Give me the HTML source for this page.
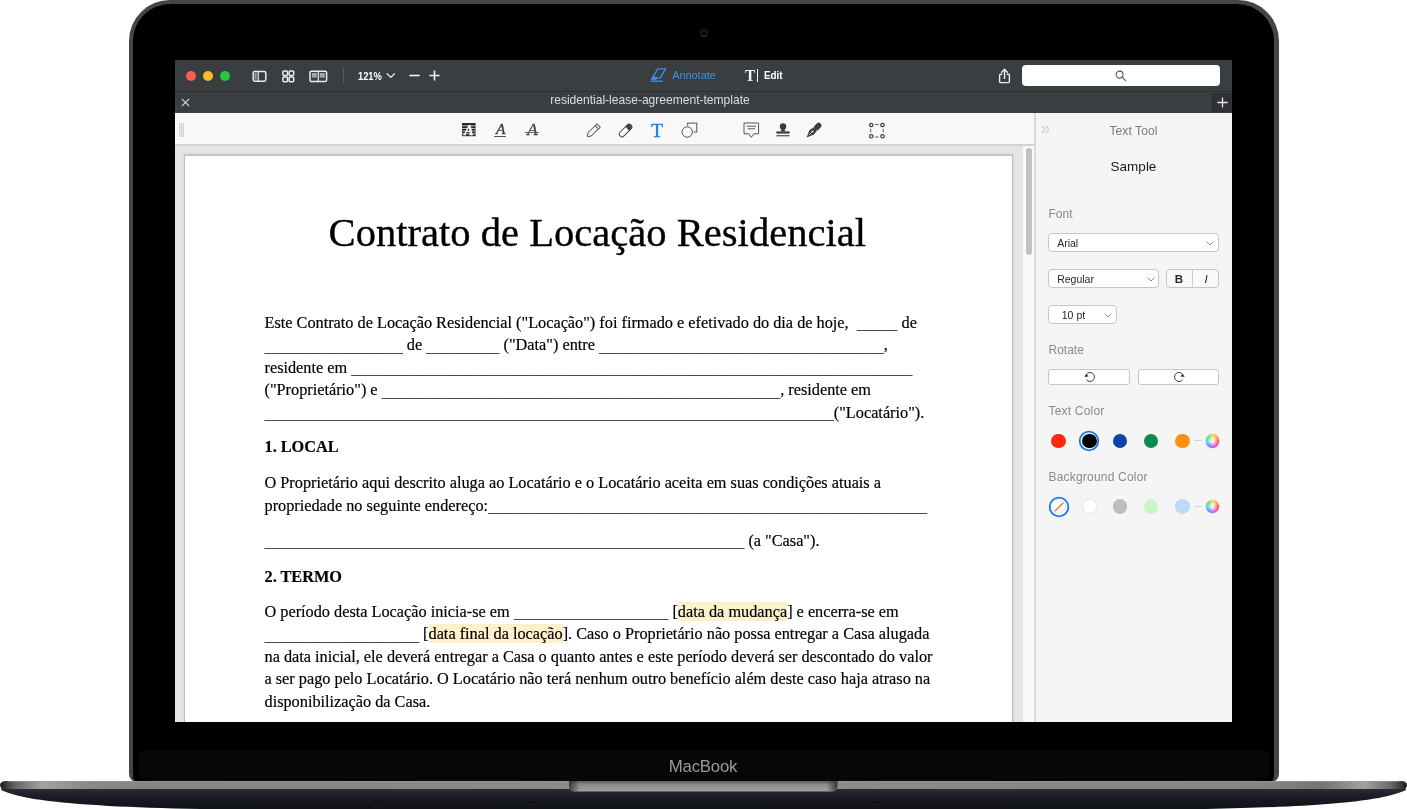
<!DOCTYPE html>
<html lang="pt">
<head>
<meta charset="utf-8">
<title>residential-lease-agreement-template</title>
<style>
*{box-sizing:border-box;margin:0;padding:0}
html,body{width:1407px;height:809px;overflow:hidden;background:#fff}
body{position:relative;font-family:"Liberation Sans",sans-serif}
.abs,svg.i{position:absolute}
svg.i{overflow:visible}
#lid{position:absolute;left:128.8px;top:0;width:1150px;height:782px;background:#464646;border-radius:41px 41px 8px 8px}
#lidin{position:absolute;left:133.2px;top:4.4px;width:1141.2px;height:777.6px;background:#000;border-radius:37px 37px 5px 5px}
#chin{position:absolute;left:139px;top:751px;width:1130px;height:30px;background:#070707;border-radius:0 0 9px 9px}
#cam{position:absolute;left:699.8px;top:28.5px;width:8px;height:8px;border-radius:50%;background:#0a0a0a;border:1.3px solid #222;border-bottom-color:#3a3a3a}
#macbook{will-change:transform;position:absolute;left:603px;width:200px;top:756px;text-align:center;font-size:16.8px;color:#9b9b9b;letter-spacing:-0.2px;line-height:22px}
#screen{will-change:transform;position:absolute;left:175px;top:60px;width:1057px;height:662px;background:#e5e5e5;overflow:hidden}
#titlebar{position:absolute;left:0;top:0;width:1057px;height:32px;background:#3b3e41}
#tabbar{position:absolute;left:0;top:31px;width:1057px;height:22.5px;background:#3b3e41;border-top:1.5px solid #2e3032;border-bottom:1.5px solid #1f2021}
#toolbar{position:absolute;left:0;top:53px;width:860px;height:33px;background:#f8f8f8;border-bottom:2px solid #d2d2d2;box-shadow:inset 0 -1px 0 #fdfdfd}
#docarea{position:absolute;left:0;top:86px;width:860px;height:576px;background:#e5e5e5}
#page{position:absolute;left:9px;top:94px;width:829px;height:600px;background:#fff;border:1px solid #bebebe;border-top:2px solid #c6c6c6;box-shadow:0 0 2px rgba(0,0,0,.12)}
#scroll{position:absolute;left:848px;top:86px;width:12px;height:576px;background:#fafafa}
#thumb{position:absolute;left:2.5px;top:2px;width:6.5px;height:106.5px;border-radius:4px;background:#c1c1c1}
#side{position:absolute;left:859px;top:53px;width:198px;height:609px;background:#f5f5f5;border-left:2px solid #dadada}
.doc{position:absolute;font-family:"Liberation Serif",serif;color:#000;white-space:pre;-webkit-text-stroke:.18px #000;font-size:16.28px;line-height:22.4px;height:22.4px}
.doc b{font-weight:bold}
.doc .u{position:relative;top:1.5px;-webkit-text-stroke:0;color:#2a2a2a}
.hl{background:#fdf1cc}
.t{position:absolute;white-space:pre;line-height:16px;height:16px}
.lbl{position:absolute;font-size:12px;color:#8a8a8a;line-height:16px;white-space:pre}
.sel{position:absolute;background:#fff;border:1px solid #c6c6c6;border-radius:4px;font-size:10.5px;color:#262626;white-space:pre}
.sel span{position:absolute;top:0;line-height:17px}
</style>
</head>
<body>
<div id="lid"></div>
<div id="lidin"></div>
<div id="chin"></div>
<div id="cam"></div>
<div id="macbook">MacBook</div>
<div id="screen">
<div id="titlebar"></div>
<div id="tabbar"></div>
<div id="toolbar"></div>
<div id="docarea"></div>
<div id="page"></div>
<div id="scroll"><div id="thumb"></div></div>
<div id="side"></div>
<div class="doc" style="left:153.60px;top:149.20px;font-size:40.58px;line-height:48px;height:48px;-webkit-text-stroke:.35px #000;">Contrato de Locação Residencial</div>
<div class="doc" style="left:89.50px;top:251.61px;">Este Contrato de Locação Residencial ("Locação") foi firmado e efetivado do dia de hoje,  <span class="u">_____</span> de</div>
<div class="doc" style="left:89.50px;top:274.11px;"><span class="u">_________________</span> de <span class="u">_________</span> ("Data") entre <span class="u">___________________________________</span>,</div>
<div class="doc" style="left:89.50px;top:296.71px;">residente em <span class="u">_____________________________________________________________________</span></div>
<div class="doc" style="left:89.50px;top:319.21px;">("Proprietário") e <span class="u">_________________________________________________</span>, residente em</div>
<div class="doc" style="left:89.50px;top:341.61px;"><span class="u">______________________________________________________________________</span>("Locatário").</div>
<div class="doc" style="left:89.50px;top:376.21px;"><b>1. LOCAL</b></div>
<div class="doc" style="left:89.50px;top:412.01px;">O Proprietário aqui descrito aluga ao Locatário e o Locatário aceita em suas condições atuais a</div>
<div class="doc" style="left:89.50px;top:434.51px;">propriedade no seguinte endereço:<span class="u">______________________________________________________</span></div>
<div class="doc" style="left:89.50px;top:469.61px;"><span class="u">___________________________________________________________</span> (a "Casa").</div>
<div class="doc" style="left:89.50px;top:505.61px;"><b>2. TERMO</b></div>
<div class="doc" style="left:89.50px;top:540.71px;">O período desta Locação inicia-se em <span class="u">___________________</span> [<span class="hl">data da mudança</span>] e encerra-se em</div>
<div class="doc" style="left:89.50px;top:563.31px;"><span class="u">___________________</span> [<span class="hl">data final da locação</span>]. Caso o Proprietário não possa entregar a Casa alugada</div>
<div class="doc" style="left:89.50px;top:585.81px;">na data inicial, ele deverá entregar a Casa o quanto antes e este período deverá ser descontado do valor</div>
<div class="doc" style="left:89.50px;top:608.21px;">a ser pago pelo Locatário. O Locatário não terá nenhum outro benefício além deste caso haja atraso na</div>
<div class="doc" style="left:89.50px;top:630.61px;">disponibilização da Casa.</div>
<div class="abs" style="left:11.20px;top:11.10px;width:10.2px;height:10.2px;border-radius:50%;background:#fc5b57"></div>
<div class="abs" style="left:28.20px;top:11.10px;width:10.2px;height:10.2px;border-radius:50%;background:#fdbc2e"></div>
<div class="abs" style="left:45.30px;top:11.10px;width:10.2px;height:10.2px;border-radius:50%;background:#27c840"></div>
<svg class="i" style="left:77.00px;top:10.00px" width="15" height="13" viewBox="0 0 15 13"><rect x="1.2" y="1.4" width="12.6" height="9.8" rx="1.6" fill="none" stroke="#ececec" stroke-width="1.5"/><line x1="6.2" y1="1.4" x2="6.2" y2="11.2" stroke="#ececec" stroke-width="1.2"/><rect x="2.6" y="3" width="2" height="6.6" fill="#ececec" opacity=".55"/></svg>
<svg class="i" style="left:106.60px;top:9.80px" width="13" height="13" viewBox="0 0 13 13"><rect x="0.9" y="0.9" width="4.6" height="4.6" rx="1" fill="none" stroke="#ececec" stroke-width="1.5"/><rect x="0.9" y="7.1" width="4.6" height="4.6" rx="1" fill="none" stroke="#ececec" stroke-width="1.5"/><rect x="7.1" y="0.9" width="4.6" height="4.6" rx="1" fill="none" stroke="#ececec" stroke-width="1.5"/><rect x="7.1" y="7.1" width="4.6" height="4.6" rx="1" fill="none" stroke="#ececec" stroke-width="1.5"/></svg>
<svg class="i" style="left:133.60px;top:9.80px" width="19" height="13" viewBox="0 0 19 13"><rect x="1" y="1.2" width="16.6" height="10.4" rx="1.4" fill="none" stroke="#ececec" stroke-width="1.5"/><line x1="9.3" y1="1.2" x2="9.3" y2="11.6" stroke="#ececec" stroke-width="1.2"/><rect x="2.8" y="3" width="5" height="4.6" fill="#ececec" opacity=".6"/><rect x="10.8" y="3" width="5" height="4.6" fill="#ececec" opacity=".6"/></svg>
<div class="abs" style="left:168.2px;top:8px;width:1px;height:15px;background:#5a5d60"></div>
<div class="t" style="left:182.60px;top:8.00px;font-size:11.8px;color:#fff;font-weight:bold;transform:scaleX(.79);transform-origin:0 50%">121%</div>
<svg class="i" style="left:210.50px;top:12.00px" width="10" height="8" viewBox="0 0 10 8"><path d="M1.2 1.8 L4.8 5.4 L8.4 1.8" fill="none" stroke="#e6e6e6" stroke-width="1.3" stroke-linecap="round" stroke-linejoin="round"/></svg>
<svg class="i" style="left:234.00px;top:10.00px" width="11" height="11" viewBox="0 0 11 11"><line x1="0.4" y1="5.5" x2="10.6" y2="5.5" stroke="#f4f4f4" stroke-width="1.6"/></svg>
<svg class="i" style="left:254.40px;top:9.90px" width="11" height="11" viewBox="0 0 11 11"><path d="M0.4 5.5H10.6M5.5 0.4V10.6" stroke="#f4f4f4" stroke-width="1.6" fill="none"/></svg>
<svg class="i" style="left:475.00px;top:8.00px" width="17" height="15" viewBox="0 0 17 15"><path d="M7.8 0.9 L15.6 0.9 L10.2 9.8 L2.4 9.8 Z" fill="none" stroke="#3d8fe2" stroke-width="1.3" stroke-linejoin="round"/><path d="M3.2 8.4 L1 11.7 L5.8 11.7 L7.2 9.8 Z" fill="#3d8fe2" stroke="#3d8fe2" stroke-width=".8" stroke-linejoin="round"/><line x1="0.8" y1="13.2" x2="12.8" y2="13.2" stroke="#3d8fe2" stroke-width="1.3"/></svg>
<div class="t" style="left:497.20px;top:6.80px;font-size:10.9px;color:#3d8fe2;font-weight:normal;">Annotate</div>
<div class="t" style="left:570px;top:6.5px;font-family:'Liberation Serif',serif;font-size:17px;font-weight:bold;line-height:18px;height:18px;color:#f2f2f2;transform:scaleX(.9);transform-origin:0 50%">T</div>
<div class="abs" style="left:581.6px;top:8.599999999999994px;width:1.3px;height:13.6px;background:#f2f2f2"></div>
<div class="t" style="left:589.30px;top:6.80px;font-size:10.9px;color:#fff;font-weight:bold;transform:scaleX(.9);transform-origin:0 50%">Edit</div>
<svg class="i" style="left:823.00px;top:7.50px" width="13" height="16" viewBox="0 0 13 16"><path d="M4.2 6.2H2.6Q1.6 6.2 1.6 7.2V13.6Q1.6 14.6 2.6 14.6H10.4Q11.4 14.6 11.4 13.6V7.2Q11.4 6.2 10.4 6.2H8.8" fill="none" stroke="#f0f0f0" stroke-width="1.4" stroke-linejoin="round"/><path d="M6.5 10.4V1.6M3.7 4.2L6.5 1.3L9.3 4.2" fill="none" stroke="#f0f0f0" stroke-width="1.4" stroke-linecap="round" stroke-linejoin="round"/></svg>
<div class="abs" style="left:847.2px;top:4.5px;width:198px;height:21.5px;border-radius:4px;background:#fff"></div>
<svg class="i" style="left:940.00px;top:10.00px" width="12" height="12" viewBox="0 0 12 12"><circle cx="4.6" cy="4.6" r="3.5" fill="none" stroke="#5c5c5c" stroke-width="1.1"/><line x1="7.2" y1="7.2" x2="10.6" y2="10.6" stroke="#5c5c5c" stroke-width="1.2" stroke-linecap="round"/></svg>
<svg class="i" style="left:5.50px;top:38.00px" width="9" height="9" viewBox="0 0 9 9"><path d="M0.8 0.8L8.2 8.2M8.2 0.8L0.8 8.2" stroke="#d8d8d8" stroke-width="1.1" fill="none"/></svg>
<div class="t" style="left:375.20px;top:32.40px;font-size:12.05px;color:#dedede;font-weight:normal;">residential-lease-agreement-template</div>
<div class="abs" style="left:1036.5px;top:32.5px;width:21px;height:19.5px;background:#2f3134;border-left:1px solid #27292b"></div>
<svg class="i" style="left:1041.50px;top:36.50px" width="11" height="11" viewBox="0 0 11 11"><path d="M0.4 5.5H10.6M5.5 0.4V10.6" stroke="#eaeaea" stroke-width="1.3" fill="none"/></svg>
<div class="abs" style="left:4px;top:63px;width:5px;height:13.6px;background:repeating-linear-gradient(90deg,#d2d2d2 0,#d2d2d2 1px,#ececec 1px,#ececec 2px)"></div>
<svg class="i" style="left:286.70px;top:63.00px" width="14" height="14" viewBox="0 0 14 14"><rect x="0" y="0" width="13.6" height="13.2" fill="#2b2b2b"/><rect x="0" y="2.4" width="13.6" height="0.9" fill="#f8f8f8" opacity=".75"/><rect x="0" y="5.0" width="13.6" height="0.9" fill="#f8f8f8" opacity=".75"/><rect x="0" y="7.6" width="13.6" height="0.9" fill="#f8f8f8" opacity=".75"/><rect x="0" y="10.2" width="13.6" height="0.9" fill="#f8f8f8" opacity=".75"/><text x="6.9" y="11.6" text-anchor="middle" font-family="Liberation Serif, serif" font-style="italic" font-weight="bold" font-size="14.5" fill="#fff" stroke="#fff" stroke-width=".25">A</text></svg>
<div class="t" style="left:321.00px;top:60.40px;font-family:'Liberation Serif',serif;font-style:italic;font-size:15.4px;line-height:18px;height:18px;color:#3c3c3c;-webkit-text-stroke:.3px #3c3c3c">A</div>
<div class="abs" style="left:319.2px;top:75.6px;width:12px;height:1px;background:#555"></div>
<div class="t" style="left:352.20px;top:60.86px;font-family:'Liberation Serif',serif;font-style:italic;font-size:17px;line-height:18px;height:18px;color:#3c3c3c;-webkit-text-stroke:.3px #3c3c3c">A</div>
<div class="abs" style="left:349.70000000000005px;top:71.6px;width:14.2px;height:1px;background:#666"></div>
<svg class="i" style="left:411.20px;top:62.80px" width="15" height="15" viewBox="0 0 15 15"><g transform="rotate(45 7.5 7.5)"><path d="M5.2 0.3 H9.8 V12.6 L8.2 15.6 Q7.5 16.4 6.8 15.6 L5.2 12.6 Z" fill="none" stroke="#5a5a5a" stroke-width="1" stroke-linejoin="round"/><path d="M5.2 2.8H9.8" stroke="#5a5a5a" stroke-width="1" fill="none"/></g></svg>
<svg class="i" style="left:443.10px;top:62.50px" width="15" height="15" viewBox="0 0 15 15"><g transform="rotate(45 7.5 7.5)"><rect x="4.8" y="-0.2" width="5.4" height="15.2" rx="2" fill="#fafafa" stroke="#444" stroke-width="1"/><path d="M4.8 5V1.8Q4.8 -0.2 6.8 -0.2H8.2Q10.2 -0.2 10.2 1.8V5Z" fill="#444"/></g></svg>
<div class="t" style="left:476.1px;top:59.16000000000001px;font-family:'Liberation Serif',serif;font-size:19.8px;line-height:22px;height:22px;color:#1a7ff0;-webkit-text-stroke:.35px #1a7ff0">T</div>
<svg class="i" style="left:505.50px;top:62.00px" width="17" height="17" viewBox="0 0 17 17"><rect x="6.6" y="1.1" width="9.2" height="8.9" fill="none" stroke="#555" stroke-width="1"/><circle cx="6.2" cy="10" r="5.4" fill="#f8f8f8" stroke="#f8f8f8" stroke-width="2.4"/><circle cx="6.2" cy="10" r="5.2" fill="#f8f8f8" stroke="#555" stroke-width="1"/></svg>
<svg class="i" style="left:568.00px;top:61.60px" width="17" height="17" viewBox="0 0 17 17"><path d="M1 1 H15.6 V11.8 H10.8 L8.3 15.4 L5.8 11.8 H1 Z" fill="none" stroke="#555" stroke-width="1" stroke-linejoin="round"/><path d="M3.6 4.2H13M4.6 6.8H12" stroke="#555" stroke-width="1" fill="none"/></svg>
<svg class="i" style="left:601.00px;top:63.00px" width="14" height="14" viewBox="0 0 14 14"><circle cx="7" cy="3.4" r="3.2" fill="#3c3c3c"/><path d="M5.6 5 L4.9 8.6 H9.1 L8.4 5 Z" fill="#3c3c3c"/><rect x="0.4" y="8.4" width="13.2" height="2.2" fill="#3c3c3c"/><rect x="0.4" y="12" width="13.2" height="1.4" fill="#666"/></svg>
<svg class="i" style="left:631.40px;top:62.20px" width="16" height="16" viewBox="0 0 16 16"><path d="M0.6 15.4 L3.4 8.2 L7.2 5.6 L10.6 9 L8 12.6 Z" fill="#3c3c3c"/><g transform="rotate(45 11.4 4.8)"><rect x="8.6" y="0.2" width="5.6" height="8.4" rx="2.6" fill="#3c3c3c"/></g><path d="M3 13 L6.4 9.6" stroke="#f8f8f8" stroke-width=".9"/><circle cx="6.6" cy="9.4" r=".9" fill="#f8f8f8"/></svg>
<svg class="i" style="left:693.90px;top:62.60px" width="16" height="16" viewBox="0 0 16 16"><circle cx="2.3" cy="2.0" r="1.7" fill="none" stroke="#3c3c3c" stroke-width="1.2"/><circle cx="2.3" cy="13.3" r="1.7" fill="none" stroke="#3c3c3c" stroke-width="1.2"/><circle cx="13.5" cy="2.0" r="1.7" fill="none" stroke="#3c3c3c" stroke-width="1.2"/><circle cx="13.5" cy="13.3" r="1.7" fill="none" stroke="#3c3c3c" stroke-width="1.2"/><path d="M6.2 1.4H9.6M6.2 14H9.6M1.7 6V9.4M14.2 6V9.4" stroke="#555" stroke-width="1" fill="none"/></svg>
<svg class="i" style="left:866.00px;top:64.50px" width="9" height="9" viewBox="0 0 9 9"><path d="M0.8 0.8L4 4.5L0.8 8.2M4.6 0.8L7.8 4.5L4.6 8.2" fill="none" stroke="#b4b4b4" stroke-width="1"/></svg>
<div class="lbl" style="left:860px;width:197px;text-align:center;top:62.599999999999994px;font-size:12px;color:#7a7a7a;letter-spacing:.1px">Text Tool</div>
<div class="lbl" style="left:860px;width:197px;text-align:center;top:99px;font-size:13.5px;color:#1a1a1a">Sample</div>
<div class="lbl" style="left:873.50px;top:145.80px;font-size:12px;color:#8a8a8a;">Font</div>
<div class="sel" style="left:873.20px;top:173.20px;width:170.80px;height:18.80px"><span style="left:8.00px;line-height:18.20px">Arial</span></div>
<svg class="i" style="left:1031.40px;top:180.50px" width="8" height="5" viewBox="0 0 8 5"><path d="M0.6 0.6L4 4L7.4 0.6" fill="none" stroke="#8c8c8c" stroke-width="1"/></svg>
<div class="sel" style="left:873.20px;top:209.30px;width:111.10px;height:18.70px"><span style="left:8.00px;line-height:18.10px">Regular</span></div>
<svg class="i" style="left:971.60px;top:216.50px" width="8" height="5" viewBox="0 0 8 5"><path d="M0.6 0.6L4 4L7.4 0.6" fill="none" stroke="#8c8c8c" stroke-width="1"/></svg>
<div class="sel" style="left:991px;top:209.3px;width:53px;height:18.7px;background:#f9f9f9"></div>
<div class="abs" style="left:1017.2px;top:210.3px;width:1px;height:16.7px;background:#cfcfcf"></div>
<div class="lbl" style="left:991px;width:26px;text-align:center;top:210.8px;font-size:11.5px;color:#2a2a2a;font-weight:bold">B</div>
<div class="lbl" style="left:1018px;width:26px;text-align:center;top:210.8px;font-size:11.5px;color:#2a2a2a;font-style:italic">I</div>
<div class="sel" style="left:873.20px;top:245.20px;width:68.40px;height:18.70px"><span style="left:12.60px;line-height:18.10px">10 pt</span></div>
<svg class="i" style="left:929.00px;top:252.50px" width="8" height="5" viewBox="0 0 8 5"><path d="M0.6 0.6L4 4L7.4 0.6" fill="none" stroke="#8c8c8c" stroke-width="1"/></svg>
<div class="lbl" style="left:873.50px;top:281.60px;font-size:12px;color:#8a8a8a;">Rotate</div>
<div class="sel" style="left:873.3px;top:309.2px;width:81.6px;height:15.9px;border-radius:3px"></div>
<div class="sel" style="left:963.2px;top:309.2px;width:80.9px;height:15.9px;border-radius:3px"></div>
<svg class="i" style="left:909.20px;top:310.90px" width="12" height="12" viewBox="0 0 12 12"><path d="M3.2 2.4 A4.5 4.5 0 1 1 2.3 8.6" fill="none" stroke="#333" stroke-width="1"/><path d="M0.4 5.9L2.3 2.6L4.6 5.5Z" fill="#333"/></svg>
<svg class="i" style="left:998.10px;top:310.90px" width="12" height="12" viewBox="0 0 12 12"><path d="M8.8 2.4 A4.5 4.5 0 1 0 9.7 8.6" fill="none" stroke="#333" stroke-width="1"/><path d="M11.6 5.9L9.7 2.6L7.4 5.5Z" fill="#333"/></svg>
<div class="lbl" style="left:873.50px;top:342.90px;font-size:12px;color:#8a8a8a;letter-spacing:.2px">Text Color</div>
<div class="lbl" style="left:873.50px;top:408.80px;font-size:12px;color:#8a8a8a;letter-spacing:.2px">Background Color</div>
<div class="abs" style="left:876.30px;top:373.50px;width:14.6px;height:14.6px;border-radius:50%;background:#ff2a0e"></div>
<svg class="i" style="left:903.30px;top:369.80px" width="22" height="22" viewBox="0 0 22 22"><circle cx="11" cy="11" r="9.3" fill="#f8f8f8" stroke="#1479f4" stroke-width="1.8"/></svg>
<div class="abs" style="left:907.00px;top:373.50px;width:14.6px;height:14.6px;border-radius:50%;background:#000"></div>
<div class="abs" style="left:937.70px;top:373.50px;width:14.6px;height:14.6px;border-radius:50%;background:#0b45a4"></div>
<div class="abs" style="left:968.50px;top:373.50px;width:14.6px;height:14.6px;border-radius:50%;background:#0b8c4c"></div>
<div class="abs" style="left:1000.10px;top:373.50px;width:14.6px;height:14.6px;border-radius:50%;background:#ff9010"></div>
<div class="abs" style="left:1019px;top:380.3px;width:8px;height:1px;background:#d6d6d6"></div>
<div class="abs" style="left:1030.50px;top:374.00px;width:13.6px;height:13.6px;border-radius:50%;background:radial-gradient(circle,#fff 0,rgba(255,255,255,.7) 25%,rgba(255,255,255,0) 70%),conic-gradient(from 90deg,#ff3b30,#ff2d9a,#b04cff,#3f7bff,#2fd3e6,#3ddc6a,#e8e23a,#ff9a2a,#ff3b30);box-shadow:0 0 0 .5px rgba(0,0,0,.15)"></div>
<svg class="i" style="left:872.60px;top:435.50px" width="22" height="22" viewBox="0 0 22 22"><circle cx="11" cy="11" r="9.3" fill="#fff" stroke="#1479f4" stroke-width="1.8"/></svg>
<div class="abs" style="left:876.20px;top:439.10px;width:14.8px;height:14.8px;border-radius:50%;background:#fdfdfd;border:1px solid #e2e2e2"></div>
<svg class="i" style="left:877.60px;top:440.50px" width="12" height="12" viewBox="0 0 12 12"><line x1="1.6" y1="10.4" x2="10.4" y2="1.6" stroke="#ff4a3a" stroke-width="1.2"/></svg>
<div class="abs" style="left:907.00px;top:439.20px;width:14.6px;height:14.6px;border-radius:50%;background:#fff;border:1px solid #e4e4e4"></div>
<div class="abs" style="left:937.70px;top:439.20px;width:14.6px;height:14.6px;border-radius:50%;background:#bdbdbd"></div>
<div class="abs" style="left:968.50px;top:439.20px;width:14.6px;height:14.6px;border-radius:50%;background:#c9f7cb"></div>
<div class="abs" style="left:1000.10px;top:439.20px;width:14.6px;height:14.6px;border-radius:50%;background:#bcd9fa"></div>
<div class="abs" style="left:1019px;top:446.0px;width:8px;height:1px;background:#d6d6d6"></div>
<div class="abs" style="left:1030.50px;top:439.70px;width:13.6px;height:13.6px;border-radius:50%;background:radial-gradient(circle,#fff 0,rgba(255,255,255,.7) 25%,rgba(255,255,255,0) 70%),conic-gradient(from 90deg,#ff3b30,#ff2d9a,#b04cff,#3f7bff,#2fd3e6,#3ddc6a,#e8e23a,#ff9a2a,#ff3b30);box-shadow:0 0 0 .5px rgba(0,0,0,.15)"></div>
</div>
<svg class="abs" style="left:0;top:778px" width="1407" height="31" viewBox="0 778 1407 31">
<defs>
<linearGradient id="sv" x1="0" x2="1" y1="0" y2="0">
<stop offset="0" stop-color="#141414"/><stop offset=".004" stop-color="#3a3a3a"/><stop offset=".012" stop-color="#6a6a6a"/><stop offset=".03" stop-color="#a2a2a2"/><stop offset=".06" stop-color="#8a8a8a"/><stop offset=".1" stop-color="#858585"/><stop offset=".5" stop-color="#8c8c8c"/><stop offset=".9" stop-color="#858585"/><stop offset=".94" stop-color="#747474"/><stop offset=".97" stop-color="#a2a2a2"/><stop offset=".988" stop-color="#6a6a6a"/><stop offset=".996" stop-color="#3a3a3a"/><stop offset="1" stop-color="#141414"/>
</linearGradient>
<linearGradient id="bd" x1="0" x2="0" y1="0" y2="1">
<stop offset="0" stop-color="#2a2c36"/><stop offset=".25" stop-color="#1d1f29"/><stop offset="1" stop-color="#101116"/>
</linearGradient>
<linearGradient id="nt" x1="0" x2="0" y1="0" y2="1">
<stop offset="0" stop-color="#5a5a5a"/><stop offset=".35" stop-color="#8c8c8c"/><stop offset="1" stop-color="#a2a2a2"/>
</linearGradient>
<linearGradient id="nh" x1="0" x2="1" y1="0" y2="0"><stop offset="0" stop-color="#2a2a2a" stop-opacity=".85"/><stop offset=".04" stop-color="#2a2a2a" stop-opacity="0"/><stop offset=".96" stop-color="#2a2a2a" stop-opacity="0"/><stop offset="1" stop-color="#2a2a2a" stop-opacity=".85"/></linearGradient>
</defs>
<path d="M0 785.5 Q0 781 6 781 H1401 Q1407 781 1407 785.5 L1405 790 H2 Z" fill="url(#sv)"/>
<rect x="8" y="781" width="1391" height="1" fill="#a0a0a0" opacity=".5"/>
<path d="M0 789.4 H1407 C1389 798 1352 807 1177 809.5 H230 C55 807 18 798 0 789.4 Z" fill="url(#bd)"/>
<rect x="3" y="789" width="1401" height="1.2" fill="#2a2a2e"/>
<path d="M569 781 H837.5 V786 Q837.5 791.6 831 791.6 H575.500 Q569 791.6 569 786 Z" fill="url(#nt)"/>
<path d="M569 781 H837.5 V786 Q837.5 791.6 831 791.6 H575.500 Q569 791.6 569 786 Z" fill="url(#nh)"/>
<rect x="372" y="800.8" width="11" height="1" rx=".5" fill="#0c0d12"/>
<rect x="1263" y="800.8" width="11" height="1" rx=".5" fill="#0c0d12"/>
<rect x="524" y="801.5" width="14" height="1" rx=".5" fill="#0c0d12"/>
<rect x="868" y="801.5" width="14" height="1" rx=".5" fill="#0c0d12"/>
</svg>
</body>
</html>
